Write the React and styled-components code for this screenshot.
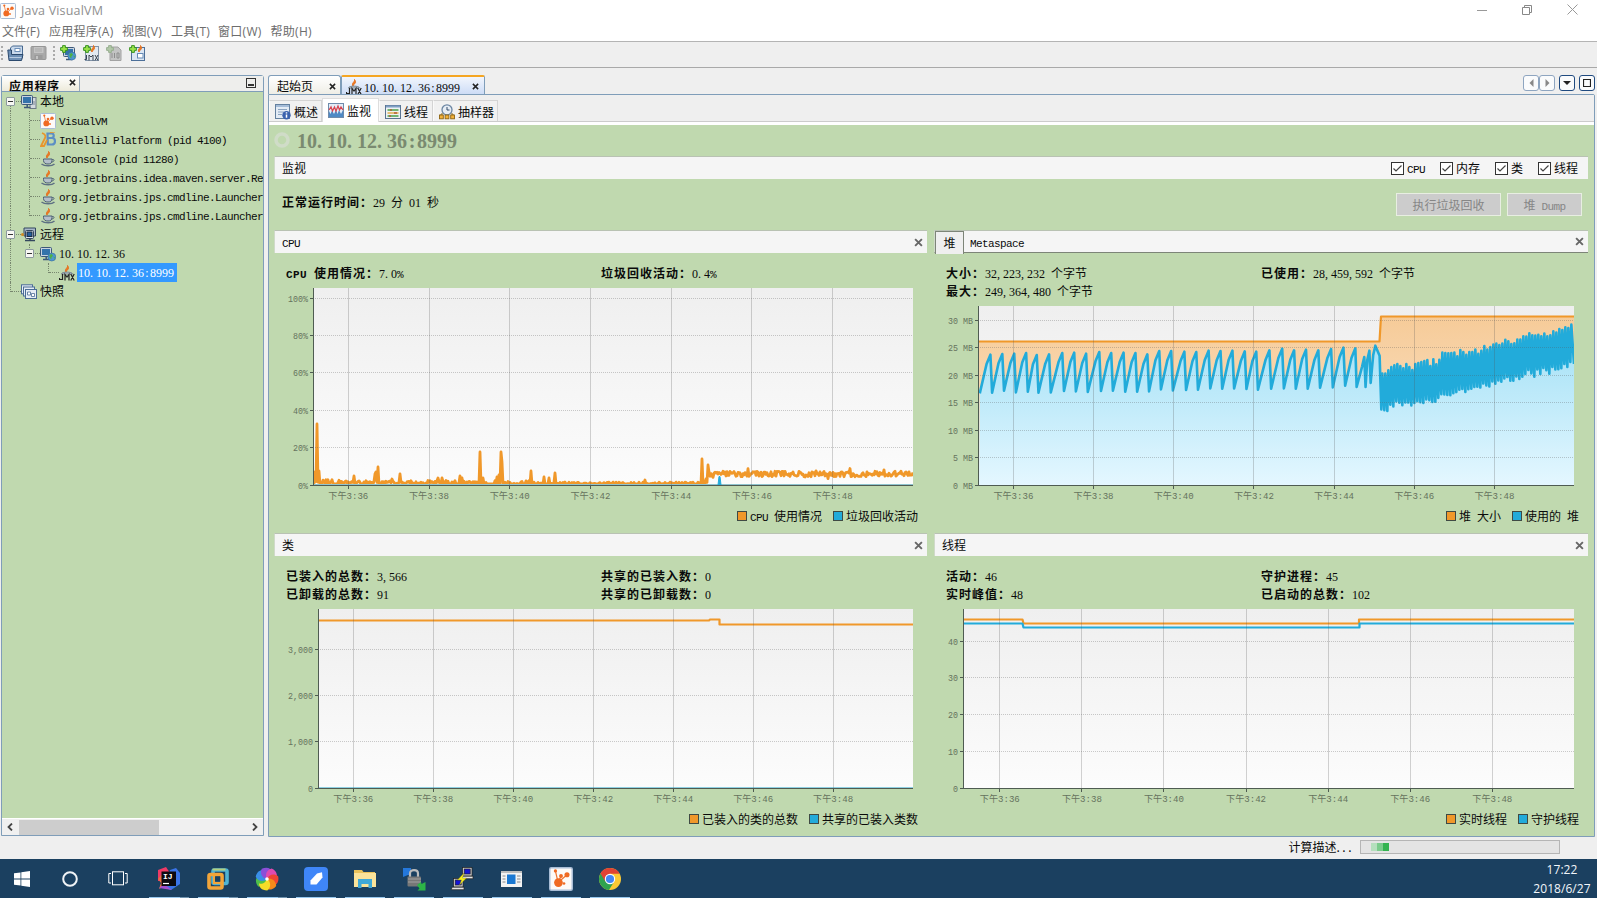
import React from "react";
import styled, { createGlobalStyle, css } from "styled-components";

const GREEN = "#c0d9af";
const ORANGE = "#f0982a";
const BLUE = "#22abda";

const Global = createGlobalStyle`
  html, body { margin: 0; padding: 0; }
  body {
    width: 1597px; height: 898px; overflow: hidden; background: #efefef; color: #0a0a0a;
    font: 12px/18px "Noto Sans CJK SC", sans-serif;
    white-space: nowrap; cursor: default;
  }
  * { box-sizing: border-box; }
  svg { display: block; flex: none; }
`;

/* ---------- text ---------- */
const Latin = styled.span`
  font-family: "Liberation Mono", monospace;
  font-size: 11px;
  line-height: 1;
  vertical-align: 0.5px;
  letter-spacing: ${(p) => (p.$bold ? 0.4 : -0.6)}px;
  font-weight: ${(p) => (p.$bold ? 700 : 400)};
  white-space: pre;
`;
/* figures sit on a half-em grid; stops and commas are widened to fill their cell */
const Figures = styled.span`
  font-family: "Liberation Serif", serif; font-size: ${(p) => p.$size}px; font-weight: ${(p) => (p.$heavy ? 700 : 400)}; line-height: 1; white-space: pre;
  i { font-style: normal; letter-spacing: 0.25em; }
  b { font-weight: inherit; padding: 0 ${(p) => (p.$heavy ? 0.083 : 0.111)}em; }
  u { text-decoration: none; letter-spacing: -0.333em; margin-right: 0; }
`;
const Num = ({ children, size = 12, heavy }) => (
  <Figures $size={size} $heavy={heavy}>
    {children.split(/([.,: ])/).map((s, i) =>
      s === ":" ? <b key={i}>{s}</b> : /^[., ]$/.test(s) ? <i key={i}>{s}</i> : s
    )}
  </Figures>
);

const T = ({ children, bold }) =>
  String(children)
    .split(/([\x20-\x7e]+)/)
    .filter(Boolean)
    .map((s, i) => {
      if (!/^[\x20-\x7e]/.test(s)) return <React.Fragment key={i}>{s}</React.Fragment>;
      if (/\d/.test(s) && /^[\d.,: ]+$/.test(s)) return <Num key={i}>{s}</Num>;
      if (/^[\d.]+%$/.test(s)) return <React.Fragment key={i}><Num>{s.slice(0, -1)}</Num><Latin>%</Latin></React.Fragment>;
      return <Latin key={i} $bold={bold}>{s}</Latin>;
    });

/* ---------- icons ---------- */
const VmIcon = ({ size = 16 }) => (
  <svg width={size} height={size} viewBox="0 0 16 16">
    <rect x=".5" y=".5" width="15" height="15" rx="1" fill="#fdfaf8" stroke="#a9bdd6" />
    <path d="M6 10 4.3 2.8M6 10l2.3-4.2M7 9.5l5-4.3" stroke="#ee7530" strokeWidth=".8" fill="none" />
    <circle cx="6.3" cy="10.4" r="2.9" fill="#f06a22" />
    <circle cx="4.3" cy="2.6" r="1.1" fill="#f06a22" />
    <circle cx="8" cy="6" r="1.3" fill="#f06a22" />
    <circle cx="12" cy="5.2" r="1.7" fill="#f06a22" />
    <circle cx="10" cy="11" r=".9" fill="#f06a22" />
  </svg>
);
const Plus = () => (
  <path d="M2.6.6h2.8v2h2v2.8h-2v2H2.6v-2h-2V2.6h2z" fill="#9be24a" stroke="#2f8c1b" strokeWidth=".9" />
);
const OpenIcon = () => (
  <svg width="17" height="17" viewBox="0 0 17 17">
    <path d="M3.500 12V3l2-2h10v12z" fill="#c9d9ec" stroke="#46688f" />
    <rect x="8" y="3.500" width="5" height="3" fill="#fff" stroke="#6c8fb8" />
    <path d="M.8 5h3.700v4.500H16L14.500 15.500H2z" fill="#6d8fb5" stroke="#2c4a6e" />
    <path d="M2.500 12.500h12" stroke="#b9cce2" />
  </svg>
);
const SaveIcon = () => (
  <svg width="17" height="17" viewBox="0 0 17 17">
    <rect x="1" y="1.500" width="15" height="13" rx="1" fill="#a9a9a9" stroke="#969696" />
    <rect x="4" y="2" width="9.500" height="6" fill="#c4c4c4" />
    <path d="M5 4h7M5 6h7" stroke="#aaa" />
    <rect x="4.500" y="10" width="8" height="5" fill="#9a9a9a" />
    <rect x="6" y="11" width="2" height="3" fill="#c4c4c4" />
  </svg>
);
const Monitor = ({ x = 0, y = 0 }) => (
  <g transform={`translate(${x} ${y})`}>
    <rect x=".5" y=".5" width="11" height="9" rx="1" fill="#c9d3df" stroke="#3d5878" />
    <rect x="2" y="2" width="8" height="6" fill="#3473ab" />
    <path d="M3 12.500h6.500M6.200 10v2" stroke="#3d5878" strokeWidth="1.500" />
  </g>
);
const Globe = () => (
  <g>
    <circle cx="11.800" cy="11" r="4" fill="#4d96d4" stroke="#386a96" strokeWidth=".6" />
    <path d="M9.500 8.800l2.500-.8 1 2-1.500 1.200-.2 2.400-1.800-2z M13.500 10.500l1.500.5-.8 2z" fill="#4fb045" />
  </g>
);
const AddHostIcon = () => (
  <svg width="17" height="17" viewBox="0 0 17 17"><Monitor x={3} y={2} /><Globe /><Plus /></svg>
);
const JavaIcon = () => (
  <svg width="16" height="16" viewBox="0 0 16 16">
    <path d="M8.500.5c1 2-3.500 3.500-1.500 6.500 0-1.500 3-2.500 2.500-4.500C9.500 1.500 9 1 8.500.5z" fill="#ee7a22" stroke="#e5701d" strokeWidth="1" />
    <path d="M3.500 8h8.500v1.500c0 2.500-1.500 3.500-4 3.500s-4.500-1-4.500-3.500z" fill="#b4bfca" stroke="#4d6175" />
    <path d="M12 8.500c3-.5 2.500 2.500-.5 2.500" fill="none" stroke="#4d6175" />
    <path d="M1.500 13c3 2.400 10.500 2.400 13 0" fill="none" stroke="#5d6f83" strokeWidth="1.500" />
  </svg>
);
const Flame = ({ x = 0 }) => (
  <path transform={`translate(${x} 0)`} d="M8.500.5c1 2-3.500 3.500-1.500 6.500 0-1.500 3-2.500 2.500-4.500z" fill="#ee7a22" stroke="#e5701d" strokeWidth="1" />
);
const JmxMark = () => (
  <path
    d="M3.500 9v5.500H.5V13M6 15.500V9.500l2 2.500 2-2.500v6M11.800 9l3.400 6.500M15.200 9l-3.400 6.500"
    fill="none" stroke="#222" strokeWidth="1.200"
  />
);
const JmxIcon = () => (
  <svg width="16" height="16" viewBox="0 0 16 16">
    <Flame />
    <path d="M2.500 9c0-2.500 11-2.500 11 0z" fill="#c9d0d6" stroke="#6b7a88" strokeWidth=".9" />
    <JmxMark />
  </svg>
);
const AddJmxIcon = () => (
  <svg width="17" height="17" viewBox="0 0 17 17">
    <rect x="2.500" y="1.500" width="13" height="14" fill="#e2e9f1" stroke="#8193a8" />
    <Flame x={2} />
    <path d="M3.500 10v4.500H1.500M6 15.500V10l2 2 2-2v5.500M12 10l3 5.500M15 10l-3 5.500" fill="none" stroke="#3a4450" />
    <Plus />
  </svg>
);
const AddDumpIcon = () => (
  <svg width="17" height="17" viewBox="0 0 17 17">
    <path d="M4 2h8l3 3v10.500H4z" fill="#c3c3c3" stroke="#a2a2a2" />
    <path d="M6 8v5M8.500 8v5M11 8h2v5h-2z" stroke="#8d8d8d" fill="none" />
    <path d="M2.600.6h2.800v2h2v2.800h-2v2H2.600v-2h-2V2.600h2z" fill="#b2c8a8" stroke="#94ac8c" strokeWidth=".9" />
  </svg>
);
const AddSnapIcon = () => (
  <svg width="17" height="17" viewBox="0 0 17 17">
    <rect x="2.500" y="2.500" width="13" height="13" fill="#dbe6f3" stroke="#4d6f99" />
    <Flame x={3} />
    <rect x="8.500" y="8.500" width="5.500" height="4.500" fill="#fff" stroke="#6489b5" /><Plus />
  </svg>
);
const LocalIcon = () => (
  <svg width="16" height="16" viewBox="0 0 16 16">
    <rect x="9" y="3.500" width="6" height="11" fill="#d4d9df" stroke="#6d7884" /><path d="M11 8h3M11 10h3" stroke="#7d8894" />
    <Monitor y={1} />
  </svg>
);
const RemoteIcon = () => (
  <svg width="16" height="16" viewBox="0 0 16 16">
    <path d="M3 1h11.500v8H3z" fill="#a9b9ca" stroke="#33475e" />
    <rect x="4.500" y="3.500" width="8" height="8" rx="1" fill="#dbe3ec" stroke="#33475e" />
    <rect x="6" y="5" width="5" height="4.500" fill="#245f9c" stroke="#1b2c40" />
    <path d="M4 13.500h10M9 12v2" stroke="#33475e" strokeWidth="1.500" />
    <circle cx="1.500" cy="7.500" r="1.500" fill="#d08c20" />
  </svg>
);
const HostIcon = () => <svg width="16" height="16" viewBox="0 0 16 16"><Monitor y={1} /><Globe /></svg>;
const SnapIcon = () => (
  <svg width="16" height="16" viewBox="0 0 16 16" fill="#e6edf5" stroke="#4a6c96">
    <rect x=".5" y=".8" width="11" height="9" /><rect x="2.500" y="3" width="11" height="9" /><rect x="4.500" y="5.500" width="11" height="9" />
    <path d="M6.500 8h3v3h-3zM10.500 9.500h3v3h-3z" fill="#fff" strokeWidth=".8" />
  </svg>
);
const IdeaIcon = () => (
  <svg width="16" height="16" viewBox="0 0 16 16" fill="none">
    <path d="M7.500 1.500h4c3 0 3 4.500 0 4.500h-3h3.500c4 0 4 6.500 0 6.500H7.800z" stroke="#5d8fc4" strokeWidth="2.200" />
    <path d="M2 1c3 1 4 3 3 5L1 14h3l3-6" stroke="#e8962c" strokeWidth="1.800" />
    <path d="M10 .5 15 0" stroke="#e8962c" strokeWidth="1.200" />
  </svg>
);
const OverviewIcon = () => (
  <svg width="16" height="16" viewBox="0 0 16 16">
    <rect x=".5" y=".5" width="14" height="14" fill="#e3ebf5" stroke="#64809f" />
    <path d="M1 2h13" stroke="#a5bcd8" strokeWidth="2" /><path d="M3 5.500h9M3 8h6M3 10.500h4" stroke="#8ba3c0" />
    <circle cx="11.500" cy="11.200" r="4.200" fill="#3a62ae" /><path d="M11.500 10.500v3.200M11.500 8.300v1.200" stroke="#fff" strokeWidth="1.500" />
  </svg>
);
const MonitorIcon = () => (
  <svg width="16" height="16" viewBox="0 0 16 16">
    <rect x=".5" y=".5" width="15" height="14" fill="#e4edf7" stroke="#6f8bab" />
    <path d="M1 14V8l1.500 3L4 7.500 6 11l2-4 1.500 4L11 7l2 4 2-4v7z" fill="#4f89c4" />
    <path d="M1 7l2-3 1.500 4L6.500 4 8 8l2-5 1.500 4L13 4l2 3" fill="none" stroke="#d94450" strokeWidth="1.300" />
  </svg>
);
const ThreadsIcon = () => (
  <svg width="16" height="16" viewBox="0 0 16 16">
    <rect x=".5" y="1.500" width="15" height="13" fill="#eef2f4" stroke="#597391" /><path d="M1 2.500h14" stroke="#7f9fc4" strokeWidth="2" />
    <path d="M2.500 6h11M2.500 12h11" stroke="#4aa04a" strokeWidth="1.300" /><path d="M2.500 9h11" stroke="#e0a030" strokeWidth="1.300" />
    <path d="M5 6h2M9 9h3M4 12h2" stroke="#b0603a" strokeWidth="1.300" />
  </svg>
);
const SamplerIcon = () => (
  <svg width="16" height="16" viewBox="0 0 16 16">
    <circle cx="8" cy="5.800" r="5" fill="#e6edf5" stroke="#6c86a3" strokeWidth="1.300" /><path d="M8 3v3h2.500" stroke="#344d6b" fill="none" />
    <path d="M2 11.500V10h2M14 11.500V10h-2" stroke="#8a6a20" fill="none" />
    <g fill="#f3b13a" stroke="#8d6412" strokeWidth=".9"><rect x=".5" y="11" width="3.800" height="3.800" /><rect x="6.100" y="11" width="3.800" height="3.800" /><rect x="11.700" y="11" width="3.800" height="3.800" /></g>
  </svg>
);
const Cross = ({ size = 8, color = "#555" }) => (
  <svg width={size} height={size} viewBox="0 0 8 8"><path d="M1 1l6 6M7 1 1 7" stroke={color} strokeWidth="1.700" /></svg>
);

/* ---------- window chrome ---------- */
const Frame = styled.div`display: flex; flex-direction: column; width: 1597px; height: 898px;`;
const TitleBar = styled.div`
  display: flex; align-items: center; height: 21px; background: #fff; color: #8f8f8f;
  font: 12.500px/20px "Open Sans", sans-serif; letter-spacing: 0.18px; gap: 5px;
`;
const WindowButtons = styled.div`display: flex; margin-left: auto; gap: 35px; padding: 0 19px 2px 0; align-items: center;`;
const MenuBar = styled.div`
  display: flex; height: 21px; background: #fff; color: #6d6d6d; padding-left: 2px; gap: 9.500px;
  font: 12px/21px "Open Sans", "Noto Sans CJK SC", sans-serif; border-bottom: 1px solid #b4b4b4;
`;
const MenuItem = styled.span`width: ${(p) => p.$w}px; letter-spacing: ${(p) => p.$track || 0.1}px;`;
const ToolBar = styled.div`
  display: flex; align-items: center; height: 26px; border-bottom: 1px solid #a9a9a9; padding: 0 0 2px 1px; gap: 6px;
`;
const Grip = styled.i`width: 2px; height: 15px; background: repeating-linear-gradient(#aaa 0 2px, transparent 2px 4px); margin-right: ${(p) => p.$mr || 0}px;`;
const Work = styled.div`display: flex; height: 768px; padding: 7px 2px 0 1px; gap: 4px;`;

/* ---------- left explorer ---------- */
const Explorer = styled.div`
  width: 263px; height: 761px; border: 1px solid #7f9db9; border-radius: 3px 3px 0 0; display: flex; flex-direction: column; background: ${GREEN};
`;
const ExplorerHead = styled.div`
  display: flex; height: 16px; background: #eeeeec; border-bottom: 1px solid #7f9db9; overflow: hidden;
  align-items: flex-start; justify-content: space-between; padding-right: 7px;
`;
const ExplorerTab = styled.div`
  width: 78px; height: 16px; background: linear-gradient(#fff, #ece9d8); border-right: 1px solid #9aa9b8;
  display: flex; padding-left: 7px; gap: 9px; font-weight: 700; line-height: 20px; letter-spacing: 0.7px;
  svg { margin-top: 3px; }
`;
const MinButton = styled.i`width: 10px; height: 10px; border: 1px solid #333; margin-top: 2px; padding: 5px 1px 0; &::after { content: ""; display: block; height: 2px; background: #333; }`;
const Tree = styled.div`flex: 1; overflow: hidden;`;
const TreeRow = styled.div`display: flex; align-items: center; height: 19.050px;`;
const Guide = styled.i`
  position: relative; flex: none; width: 19px; height: 100%;
  &::before {
    content: ""; position: absolute; left: 8px; width: 0; border-left: 1px dotted #77866e;
    ${(p) => ({
      none: css`display: none;`,
      start: css`top: 50%; bottom: 0;`,
      full: css`top: 0; bottom: 0;`,
      tee: css`top: 0; bottom: 0;`,
      end: css`top: 0; bottom: 50%;`,
    })[p.$kind]}
  }
  &::after {
    content: ""; position: absolute; left: 9px; right: 0; top: 9px; border-top: 1px dotted #77866e;
    ${(p) => (p.$kind === "none" || p.$kind === "full" ? "display: none;" : "")}
  }
`;
const Expander = styled.b`
  position: absolute; z-index: 1; left: 4px; top: 5px; width: 9px; height: 9px; background: #f8f8f4; border: 1px solid #8c9a9e; border-radius: 1px;
  &::after { content: ""; position: absolute; left: 1px; right: 1px; top: 3px; height: 1px; background: #333; }
`;
const NodeText = styled.span`
  margin-left: 2px; padding: 0 1px; height: 19px; line-height: 18px;
  ${(p) => p.$selected && css`background: #3399ff; color: #fff; padding: 0 3px 0 1px;`}
`;
const nodes = [
  ["本地", <LocalIcon />, ["start*"]],
  ["VisualVM", <VmIcon />, ["full", "tee"]],
  ["IntelliJ Platform (pid 4100)", <IdeaIcon />, ["full", "tee"]],
  ["JConsole (pid 11280)", <JavaIcon />, ["full", "tee"]],
  ["org.jetbrains.idea.maven.server.Re", <JavaIcon />, ["full", "tee"]],
  ["org.jetbrains.jps.cmdline.Launcher", <JavaIcon />, ["full", "tee"]],
  ["org.jetbrains.jps.cmdline.Launcher", <JavaIcon />, ["full", "end"]],
  ["远程", <RemoteIcon />, ["tee*"]],
  ["10.10.12.36", <HostIcon />, ["full", "end*"]],
  ["10.10.12.36:8999", <JmxIcon />, ["full", "none", "end"]],
  ["快照", <SnapIcon />, ["end"]],
];
const HScroll = styled.div`display: flex; align-items: center; height: 17px; background: #f0f0f0; border-top: 1px solid #fff; padding: 0 5px; justify-content: space-between;`;
const Thumb = styled.i`width: 140px; height: 15px; background: #cdcdcd; margin-left: 6px; margin-right: auto;`;

/* ---------- document area ---------- */
const Doc = styled.div`width: 1327px; height: 761px; display: flex; flex-direction: column;`;
const DocTabs = styled.div`display: flex; height: 19px;`;
const DocTab = styled.div`
  display: flex; align-items: center; width: ${(p) => p.$w}px; height: 19px; padding: 2px ${(p) => (p.$active ? 5 : 4)}px 0 ${(p) => (p.$active ? 4 : 8)}px;
  border: 1px solid #7f9db9; border-bottom: 0; border-radius: 3px 3px 0 0; background: linear-gradient(#fff, #efeee6);
  ${(p) => p.$active && css`background: linear-gradient(#f2f6fd, #cddcf6); border-top: 2px solid #f5a623; border-radius: 2px 2px 0 0;`}
  span { margin-left: ${(p) => (p.$active ? 1 : 0)}px; }
  > svg:last-child { margin-left: auto; }
`;
const TabControls = styled.div`display: flex; gap: 4px; margin-left: auto;`;
const ControlPair = styled.div`display: flex;`;
const ControlButton = styled.i`
  width: 16px; height: 16px; border: 1px solid ${(p) => (p.$dim ? "#8ea5c0" : "#1f4a80")}; border-radius: 3px; background: #fafbfc;
  display: grid; place-items: center;
`;
const DocBody = styled.div`flex: 1; border: 1px solid #7f9db9; background: ${GREEN}; display: flex; flex-direction: column; border-radius: 0 2px 0 0;`;
const ViewTabs = styled.div`display: flex; align-items: flex-end; height: 30px; padding: 0 0 3px 0; background: linear-gradient(#efefef 26px, #ccc 26px 27px, #fff 27px);`;
const ViewTab = styled.div`
  display: flex; align-items: center; gap: 3px; width: ${(p) => p.$w}px; height: 21px; padding: 1px 0 0 5px; background: #f1f1f1;
  border: 1px solid #d4d4d4; border-left-color: #fafafa; border-bottom: 0;
  margin-bottom: 1px; 
  ${(p) => p.$active && css`background: #fff; height: 24px; border-color: #ddd; margin-bottom: 0; padding-bottom: 1px;`}
`;
const SourceTitle = styled.div`
  display: flex; align-items: center; gap: 7px; height: 31px; padding: 2px 0 0 5px; color: #7a8a70; line-height: 22px;
  svg { margin-bottom: 3px; }
  span { line-height: 22px; }
`;
const SectionBar = styled.div`
  display: flex; align-items: center; height: 23px; background: #f5f5f5; border-top: 1px solid #b9c2b3; border-left: 1px solid #d0dac9;
  padding: 0 ${(p) => p.$right ?? 4}px 0 7px; justify-content: space-between;
  ${(p) => p.$margin && css`margin: 0 6px 0 5px; padding-right: 10px;`}
  ${(p) => p.$tabs && css`padding-left: 0; border-bottom: 1px solid #7d8578;`}
`;
const Checks = styled.div`display: flex; gap: 15px;`;
const Check = styled.label`display: flex; gap: 3px; align-items: center;`;
const BarTab = styled.span`
  width: 29px; height: 23px; border: 1px solid #7d8578; border-bottom: 0; background: #efefef; text-align: center; line-height: 22px; margin-top: 1px; 
`;
const BarTabs = styled.div`display: flex; gap: 6px; align-items: center; height: 23px;`;
const UptimeRow = styled.div`display: flex; height: 51px; align-items: flex-start; padding: 14px 12px 0 13px;`;
const Caption = styled.b`font-weight: 700; letter-spacing: 1px;`;
const Uptime = styled.div`flex: 1;`;
const Disabled = styled.button`
  width: ${(p) => p.$w}px; height: 23px; margin-left: 6px; padding: 0; border: 1px solid #e8eee2; background: #cccccc; color: #868686;
  font: 12px/20px "Noto Sans CJK SC", sans-serif;
`;
const Panels = styled.div`
  display: grid; grid-template-columns: 653px 654px; grid-template-rows: 303px 303px; column-gap: 7px; padding-left: 5px; height: 606px;
`;
const Panel = styled.section`display: flex; flex-direction: column; overflow: hidden;`;
const Stats = styled.div`display: grid; grid-template-columns: 315px 1fr; grid-auto-rows: 18px; padding: 11px 0 0 12px; margin-bottom: 3px; line-height: 18px;`;
const Legend = styled.div`display: flex; justify-content: flex-end; gap: 11px; height: 20px; align-items: center; padding-right: ${(p) => p.$right}px;`;
const LegendItem = styled.span`display: flex; align-items: center; gap: 3px;`;
const Swatch = styled.i`width: 10px; height: 10px; border: 1px solid #3f4a44; background: ${(p) => p.$color}; margin-bottom: 1px;`;

const ChartText = styled.text`font: 9.500px "Liberation Mono", "Noto Sans CJK SC", monospace; fill: #65725d;`;

function Chart({ id, box, plot, xs, ys, children }) {
  const [x0, y0, x1, y1] = plot;
  return (
    <svg width={box[2]} height={box[3]} viewBox={box.join(" ")}>
      <defs>
        <linearGradient id={id + "bg"} x2="0" y2="1"><stop stopColor="#efefef" /><stop offset="1" stopColor="#fcfcfc" /></linearGradient>
        <linearGradient id={id + "or"} x2="0" y2="1"><stop stopColor="#f6cb98" /><stop offset="1" stopColor="#fbe8d2" /></linearGradient>
        <linearGradient id={id + "bl"} x2="0" y2="1"><stop stopColor="#9fdff5" /><stop offset="1" stopColor="#e4f7ff" /></linearGradient>
        <clipPath id={id + "cp"}><rect x={x0} y={y0} width={x1 - x0} height={y1 - y0 + 1} /></clipPath>
      </defs>
      <rect x={x0} y={y0} width={x1 - x0} height={y1 - y0} fill={`url(#${id}bg)`} />
      <g clipPath={`url(#${id}cp)`}>{children}</g>
      <g stroke="#555" strokeOpacity=".3" shapeRendering="crispEdges">
        {xs.map((x) => <path key={x} d={`M${Math.floor(x) + 0.5} ${y0}V${y1}`} strokeOpacity=".26" />)}
        {ys.map(([l, y]) => <path key={l} d={`M${x0} ${Math.floor(y) + 0.5}H${x1}`} strokeDasharray="1 1" />)}
      </g>
      <g stroke="#4f5c52" shapeRendering="crispEdges">
        <path d={`M${x0 + 0.5} ${y0}V${y1 + 0.5}M${x0 - 3} ${y1 + 0.5}H${x1}`} />
        {xs.map((x) => <path key={x} d={`M${Math.floor(x) + 0.5} ${y1}v4`} />)}
        {ys.map(([l, y]) => <path key={l} d={`M${x0 - 3} ${Math.floor(y) + 0.5}h3`} />)}
      </g>
      {xs.map((x, i) => (
        <ChartText key={i} x={x} y={y1 + 14} textAnchor="middle" textLength="40" lengthAdjust="spacingAndGlyphs">{`下午3:${36 + i * 2}`}</ChartText>
      ))}
      {ys.map(([l, y]) => (
        <ChartText key={l} x={x0 - 5} y={y + 3.500} textAnchor="end" textLength={l.length * 5} lengthAdjust="spacingAndGlyphs">{l}</ChartText>
      ))}
    </svg>
  );
}

/* ---------- series ---------- */
const hash = (n) => {
  const v = Math.sin(n * 127.1 + 3.7) * 43758.5453;
  return v - Math.floor(v);
};
const cpuSpikes = {
  314: 472, 315: 476, 317: 424, 319: 471, 354: 476, 375: 474, 376: 472, 378: 467, 392: 479, 400: 474, 438: 478, 442: 478,
  460: 476, 462: 478, 480: 452, 483: 478, 497: 477, 499: 475, 501: 452, 502: 462, 531: 471, 544: 477, 549: 478, 555: 473,
  645: 480, 702: 459, 704: 481, 706: 479, 708: 465,
};
let cpuLine = "M314 484";
for (let x = 314; x <= 913; x += 1) {
  let y;
  if (cpuSpikes[x]) y = cpuSpikes[x];
  else if (x < 709) {
    const lift = x < 340 ? 5 : x < 540 ? 3.5 : 2;
    y = 484 - (hash(x) > 0.45 ? hash(x + 900) * lift : 0);
  } else y = 474 + (hash(x) - 0.5) * 5.5 + (x % 17 === 0 ? -3 : 0) + (x % 23 === 0 ? 3 : 0);
  cpuLine += `L${x} ${y.toFixed(1)}`;
}

const sx = (v) => 930 + v / 2.351;
const sy = (v) => 225 + v / 3;
const sawPeaks = [[142,389],[170,387],[198,386],[226,384],[251,390],[280,388],[311,384],[339,383],[367,386],[398,381],[426,384],[455,383],[483,384],[511,388],[539,378],[567,378],[598,380],[626,381],[655,377],[683,378],[711,377],[740,379],[767,380],[798,376],[828,371],[856,376],[884,374],[913,376],[943,372],[972,368],[1000,370],[1021,396],[1033,377],[1047,362]];
const sawLows = [503,497,502,500,503,502,498,499,501,498,497,500,500,499,493,496,495,494,490,491,490,492,494,491,490,491,491,488,487,482,486,486,474];
let used = `M${sx(117)} ${sy(505)}`;
sawPeaks.forEach(([px, py], i) => {
  const back = i > 30 ? 5 : 9;
  used += `L${sx(px - back)} ${sy(py + 28)}L${sx(px)} ${sy(py)}`;
  if (i < sawLows.length) used += `L${sx(px + (i > 29 ? 3 : 4))} ${sy(sawLows[i])}`;
});
used += `L${sx(1057)} ${sy(392)}`;
const upper = [[63,220],[75,222],[95,200],[112,192],[130,205],[139,192],[157,210],[166,192],[184,186],[202,180],[211,198],[220,178],[231,196],[247,158],[265,160],[283,158],[293,170],[301,150],[313,158],[322,168],[331,150],[341,160],[350,140],[359,178],[368,132],[385,152],[394,136],[412,130],[421,138],[437,118],[450,128],[459,138],[470,116],[478,126],[487,105],[496,116],[505,98],[523,110],[532,100],[541,114],[550,98],[568,114],[577,90],[587,102],[596,84],[604,96],[613,79],[623,88],[632,72],[642,82]];
const lower = [[63,328],[83,333],[92,312],[101,320],[110,302],[130,318],[139,302],[158,320],[166,302],[193,310],[202,292],[212,306],[230,305],[240,282],[257,284],[275,286],[284,274],[293,278],[302,262],[320,280],[329,258],[338,272],[347,252],[357,268],[372,248],[386,265],[395,240],[403,258],[412,238],[421,248],[440,228],[457,250],[466,226],[476,238],[493,226],[505,210],[523,230],[532,208],[541,222],[551,202],[569,222],[578,198],[587,210],[605,204],[614,190],[623,202],[632,184],[642,194]];
const at = (pts, x) => {
  const i = Math.max(1, pts.findIndex((p) => p[0] >= x));
  const [a, b] = [pts[i - 1], pts[i]];
  return a[1] + ((b[1] - a[1]) * (x - a[0])) / (b[0] - a[0]);
};
for (let x = 64; x <= 638; x += 9) {
  used += `L${1360 + x / 3} ${300 + at(lower, x) / 3}L${1360 + (x + 3) / 3} ${300 + at(upper, x + 3) / 3}`;
}
used += "L1574 364";

const xsOf = (a, b) => Array.from({ length: 7 }, (_, i) => a + ((b - a) * i) / 6);
const Series = ({ d, color, width = 2.2 }) => (
  <path d={d} fill="none" stroke={color} strokeWidth={width} strokeLinejoin="round" />
);

const PanelBar = ({ children, right }) => (
  <SectionBar $right={right}><span><T>{children}</T></span><Cross size={9} color="#666" /></SectionBar>
);
const Stat = ({ name, value }) => (
  <span><Caption><T bold>{name + "："}</T></Caption><T>{value}</T></span>
);
const LegendRow = ({ a, b }) => (
  <Legend $right={9}>
    <LegendItem><Swatch $color={ORANGE} /><span><T>{a}</T></span></LegendItem>
    <LegendItem><Swatch $color={BLUE} /><span><T>{b}</T></span></LegendItem>
  </Legend>
);
const CheckBox = ({ children }) => (
  <Check>
    <svg width="13" height="13" viewBox="0 0 13 13"><rect x=".5" y=".5" width="12" height="12" fill="#fff" stroke="#333" /><path d="M2.500 6.500 5 9l5.500-5.500" fill="none" stroke="#444" strokeWidth="1.200" /></svg>
    <span><T>{children}</T></span>
  </Check>
);

/* ---------- status and taskbar ---------- */
const Status = styled.div`display: flex; align-items: center; justify-content: flex-end; height: 23px; padding: 0 37px 1px 0; gap: 6px;`;
const StatusText = styled.span`i { font-style: normal; letter-spacing: 2.5px; }`;
const Progress = styled.div`
  display: flex; width: 200px; height: 14px; border: 1px solid #b5b5b5; background: #e4e4e4; padding: 2px 0 2px 10px;
  i { width: 6px; height: 8px; } i:nth-child(1) { background: #b5dfbd; } i:nth-child(2) { background: #7acb8b; } i:nth-child(3) { background: #34b350; }
`;
const Taskbar = styled.div`display: flex; height: 39px; background: #1b4060; justify-content: space-between;`;
const Slots = styled.div`display: flex; padding-left: 2px;`;
const Slot = styled.div`
  width: ${(p) => (p.$run ? 49 : 48)}px; height: 39px; display: grid; place-items: center; position: relative; margin-left: ${(p) => p.$ml || 0}px;
  ${(p) => p.$run && css`&::after { content: ""; position: absolute; left: 5px; width: 40px; bottom: 0; height: 1px; background: ${p.$multi ? "linear-gradient(90deg, #98c8ee 31px, #7295b0 31px)" : "#98c8ee"}; }`}
`;
const Clock = styled.div`width: 70px; text-align: center; color: #f2f6fa; font: 12px/19px "Open Sans", sans-serif; letter-spacing: 0.05px; padding: 1px 0 0 0;`;

const StartIcon = () => <svg width="16" height="16" viewBox="0 0 16 16" fill="#fff"><path d="M0 2.300 6.500 1.400v6.200H0zM7.300 1.300 16 0v7.600H7.300zM0 8.400h6.500v6.200L0 13.700zM7.300 8.400H16V16l-8.700-1.300z" /></svg>;
const CortanaIcon = () => <svg width="18" height="18" viewBox="0 0 18 18"><circle cx="9" cy="9" r="6.800" fill="none" stroke="#f0f3f6" strokeWidth="2" /></svg>;
const TaskViewIcon = () => <svg width="20" height="15" viewBox="0 0 20 15" fill="none" stroke="#fff"><rect x="4.500" y=".8" width="11" height="13" /><path d="M3 2.500H.8v9.500H3M17 2.500h2.200v9.500H17" /></svg>;
const IjText = styled.text`font: 700 8px "Liberation Mono", monospace; fill: #fff;`;
const IjIcon = () => (
  <svg width="24" height="24" viewBox="0 0 24 24">
    <path d="M1 3 9 0l4 6-5 8-7 0z" fill="#ef3a66" /><path d="M1 12 6 6l4 12-8 4 2-6z" fill="#e9703f" /><path d="M13 3l6-2 4 5v11l-9 6-6-2z" fill="#3a74e8" /><path d="M2 21l5-4 8 6z" fill="#a24fd0" />
    <rect x="4.500" y="4.500" width="14.500" height="14.500" fill="#0c0a10" /><IjText x="6" y="12">IJ</IjText><path d="M6 16.500h6" stroke="#fff" strokeWidth="1.200" />
  </svg>
);
const VmwareIcon = () => (
  <svg width="22" height="22" viewBox="0 0 22 22" fill="none">
    <rect x="6" y="2" width="14" height="13.500" rx="1.500" stroke="#4fb3d4" strokeWidth="3.600" />
    <path d="M5.500 1.500h13" stroke="#b3cf7f" strokeWidth="2" /><rect x="2" y="6.500" width="13" height="13.500" rx="1.500" stroke="#f2a53a" strokeWidth="3.600" /><rect x="7" y="7" width="8" height="8" stroke="#f2a53a" strokeWidth="2.200" />
    <rect x="8.200" y="8.500" width="5" height="5" fill="#1b4060" />
  </svg>
);
const PinwheelIcon = () => (
  <svg width="24" height="24" viewBox="0 0 24 24">
    {["#4fc04a", "#3a8fe8", "#8a4fd8", "#e04bb0", "#f04434", "#f58a1b", "#f6dc28"].map((c, i) => (
      <path key={c} d="M12 12C8.500 9.500 7.500 4 12 .5c6 .2 8.500 4 8 7.500C17.500 6.500 13.500 8 12 12z" fill={c} transform={`rotate(${i * 51.4 - 130} 12 12)`} />
    ))}
    <circle cx="12" cy="12" r="1.800" fill="#fff" />
  </svg>
);
const BirdIcon = () => <svg width="24" height="24" viewBox="0 0 24 24"><rect width="24" height="24" rx="4" fill="#3f86f8" /><path d="M6.500 13.500 13 6.500l5-1.200.5 5.200-6 7H6.500z" fill="#fff" /></svg>;
const FolderIcon = () => (
  <svg width="22" height="19" viewBox="0 0 22 19"><path d="M0 1h8l1.500 2H21v15H0z" fill="#e9c25c" /><path d="M0 4h22v14H0z" fill="#fbe39a" /><path d="M4 10h14v9h-3.500v-4h-7v4H4z" fill="#3fa9d8" /></svg>
);
const LockIcon = () => (
  <svg width="24" height="24" viewBox="0 0 24 24"><path d="M1 1h8v7H6L1 10z" fill="#2478dc" /><path d="M8 10V6.500c0-4.500 8-4.500 8 0V10" fill="none" stroke="#bcbcbc" strokeWidth="2.200" /><rect x="5.500" y="9.500" width="13.500" height="10" rx="1" fill="#777" /><path d="M6 12h13M6 15h13" stroke="#a2a2a2" /><path d="M15 18l4-3 .5 2 4-2v8.500h-8l2-2z" fill="#2db547" /></svg>
);
const PuttyIcon = () => (
  <svg width="23" height="24" viewBox="0 0 23 24">
    {[[9, 0], [0, 11]].map(([x, y]) => (
      <g key={x} transform={`translate(${x} ${y})`} stroke="#222" strokeWidth=".7"><rect x="2.500" y=".5" width="9.500" height="8.500" fill="#d0d0d0" /><rect x="4.200" y="2" width="6" height="5" fill="#1414d6" /><path d="M1 9.200h12v2.500H.3z" fill="#e4e4e4" /></g>
    ))}
    <path d="M13 6 6.500 13h4l-2 5L15.500 11h-4z" fill="#f6ee20" stroke="#807a10" strokeWidth=".4" />
  </svg>
);
const AppIcon = () => (
  <svg width="21" height="16" viewBox="0 0 21 16"><rect width="21" height="16" fill="#f3f3f3" /><path d="M0 1h21" stroke="#bdbdbd" strokeWidth="2" /><rect x="6" y="3.500" width="8.500" height="9.500" fill="#1a78d2" /><path d="M1.500 5h3M1.500 8h3M1.500 11h3M16 5h3.500M16 8h3.500M16 11h3.500" stroke="#888" /></svg>
);
const ChromeIcon = () => (
  <svg width="22" height="22" viewBox="0 0 22 22">
    <circle cx="11" cy="11" r="11" fill="#fbc934" /><path d="M11 11 1.500 5.500A11 11 0 0 0 10 22l5.500-9z" fill="#2fa350" /><path d="M11 11V5.800h9.700A11 11 0 0 0 1.500 5.500L6.300 13.600z" fill="#e04234" />
    <circle cx="11" cy="11" r="5.200" fill="#fff" /><circle cx="11" cy="11" r="4.100" fill="#4486f4" />
  </svg>
);

export default function App() {
  return (
    <Frame>
      <Global />
      <TitleBar>
        <VmIcon />
        <span>Java VisualVM</span>
        <WindowButtons>
          <svg width="10" height="10" viewBox="0 0 10 10"><path d="M0 5.500h10" stroke="#999" /></svg>
          <svg width="10" height="10" viewBox="0 0 10 10" fill="none" stroke="#888"><path d="M.5 2.500h7v7h-7zM2.500 2.500v-2h7v7h-2" /></svg>
          <svg width="11" height="11" viewBox="0 0 11 11"><path d="M.5.500l10 10M10.500.500l-10 10" stroke="#999" /></svg>
        </WindowButtons>
      </TitleBar>
      <MenuBar>
        <MenuItem $w={37.5}>文件(F)</MenuItem>
        <MenuItem $w={63.5} $track={0.25}>应用程序(A)</MenuItem>
        <MenuItem $w={39.5} $track={0.4}>视图(V)</MenuItem>
        <MenuItem $w={37.5} $track={0.3}>工具(T)</MenuItem>
        <MenuItem $w={43} $track={0.3}>窗口(W)</MenuItem>
        <MenuItem $w={41} $track={0.3}>帮助(H)</MenuItem>
      </MenuBar>
      <ToolBar>
        <Grip $mr={-2} /><OpenIcon /><SaveIcon /><Grip $mr={-1} /><AddHostIcon /><AddJmxIcon /><AddDumpIcon /><AddSnapIcon />
      </ToolBar>
      <Work>
        <Explorer>
          <ExplorerHead>
            <ExplorerTab>应用程序<Cross size={7} color="#222" /></ExplorerTab>
            <MinButton />
          </ExplorerHead>
          <Tree>
            {nodes.map(([label, icon, guides], i) => (
              <TreeRow key={i}>
                {guides.map((g, k) => (
                  <Guide key={k} $kind={g.replace("*", "")}>{g.endsWith("*") && <Expander />}</Guide>
                ))}
                {icon}
                <NodeText $selected={i === 9}><T>{label}</T></NodeText>
              </TreeRow>
            ))}
          </Tree>
          <HScroll>
            <svg width="6" height="8" viewBox="0 0 6 8"><path d="M5 .5 1.500 4 5 7.500" fill="none" stroke="#444" strokeWidth="1.800" /></svg>
            <Thumb />
            <svg width="6" height="8" viewBox="0 0 6 8"><path d="M1 .5 4.500 4 1 7.500" fill="none" stroke="#444" strokeWidth="1.800" /></svg>
          </HScroll>
        </Explorer>
        <Doc>
          <DocTabs>
            <DocTab $w={73}><span>起始页</span><Cross size={7} color="#222" /></DocTab>
            <DocTab $w={144} $active><JmxIcon /><span><T>10.10.12.36:8999</T></span><Cross size={7} color="#222" /></DocTab>
            <TabControls>
              <ControlPair>
                <ControlButton $dim><svg width="5" height="8" viewBox="0 0 5 8"><path d="M4.500 0v8L.5 4z" fill="#888" /></svg></ControlButton>
                <ControlButton $dim><svg width="5" height="8" viewBox="0 0 5 8"><path d="M.5 0v8l4-4z" fill="#888" /></svg></ControlButton>
              </ControlPair>
              <ControlButton><svg width="8" height="4" viewBox="0 0 8 4"><path d="M0 0h8L4 4z" fill="#222" /></svg></ControlButton>
              <ControlButton><svg width="8" height="8" viewBox="0 0 8 8"><path d="M.5.500h7v7h-7z" fill="none" stroke="#222" strokeWidth="1.200" /></svg></ControlButton>
            </TabControls>
          </DocTabs>
          <DocBody>
            <ViewTabs>
              <ViewTab $w={53}><OverviewIcon />概述</ViewTab>
              <ViewTab $w={57} $active><MonitorIcon />监视</ViewTab>
              <ViewTab $w={54}><ThreadsIcon />线程</ViewTab>
              <ViewTab $w={65}><SamplerIcon />抽样器</ViewTab>
            </ViewTabs>
            <SourceTitle>
              <svg width="16" height="16" viewBox="0 0 16 16"><circle cx="8" cy="8" r="6" fill="none" stroke="#d0dcc8" strokeWidth="3.500" /></svg>
              <span><Num size={20} heavy>10.10.12.36:8999</Num></span>
            </SourceTitle>
            <SectionBar $margin>
              <span>监视</span>
              <Checks><CheckBox>CPU</CheckBox><CheckBox>内存</CheckBox><CheckBox>类</CheckBox><CheckBox>线程</CheckBox></Checks>
            </SectionBar>
            <UptimeRow>
              <Uptime><Stat name="正常运行时间" value="29 分 01 秒" /></Uptime>
              <Disabled $w={105}>执行垃圾回收</Disabled>
              <Disabled $w={75}><T>堆 Dump</T></Disabled>
            </UptimeRow>
            <Panels>
              <Panel>
                <PanelBar>CPU</PanelBar>
                <Stats><Stat name="CPU 使用情况" value="7.0%" /><Stat name="垃圾回收活动" value="0.4%" /></Stats>
                <Chart id="cpu" box={[274, 285, 653, 221]} plot={[313, 288, 913, 485]} xs={xsOf(348.3, 832.7)}
                  ys={[["100%", 298], ["80%", 335.5], ["60%", 372.7], ["40%", 410.2], ["20%", 447.5], ["0%", 485]]}>
                  <Series d={cpuLine} color={ORANGE} width={2.8} />
                  <path d="M314 484.500H913" stroke="#8fc4ce" strokeWidth="1" /><path d="M718 485L719 476.500H720L721 485z" fill={BLUE} stroke={BLUE} />
                </Chart>
                <LegendRow a="CPU 使用情况" b="垃圾回收活动" />
              </Panel>
              <Panel>
                <SectionBar $tabs>
                  <BarTabs><BarTab>堆</BarTab><span><T>Metaspace</T></span></BarTabs><Cross size={9} color="#666" />
                </SectionBar>
                <Stats>
                  <Stat name="大小" value="32,223,232 个字节" /><Stat name="已使用" value="28,459,592 个字节" />
                  <Stat name="最大" value="249,364,480 个字节" />
                </Stats>
                <Chart id="heap" box={[934, 303, 654, 203]} plot={[978, 306, 1574, 485]} xs={xsOf(1013.4, 1494.4)}
                  ys={[["30 MB", 320.5], ["25 MB", 347.7], ["20 MB", 375.5], ["15 MB", 402.7], ["10 MB", 430.5], ["5 MB", 457.7], ["0 MB", 485]]}>
                  <path d="M978 341.500H1379.500L1381 316.500H1574V485H978z" fill="url(#heapor)" />
                  <Series d="M978 341.500H1379.500L1381 316.500H1574" color={ORANGE} />
                  <path d={used + "V485H979z"} fill="url(#heapbl)" />
                  <Series d={used} color={BLUE} width={2.6} />
                </Chart>
                <LegendRow a="堆 大小" b="使用的 堆" />
              </Panel>
              <Panel>
                <PanelBar>类</PanelBar>
                <Stats>
                  <Stat name="已装入的总数" value="3,566" /><Stat name="共享的已装入数" value="0" />
                  <Stat name="已卸载的总数" value="91" /><Stat name="共享的已卸载数" value="0" />
                </Stats>
                <Chart id="cls" box={[274, 606, 653, 203]} plot={[318, 609, 913, 788]} xs={xsOf(353.3, 833.1)}
                  ys={[["3,000", 649.3], ["2,000", 695.5], ["1,000", 741.3], ["0", 788]]}>
                  <Series d="M318 620.500H709L710 619.500H719.500V624.500H913" color={ORANGE} />
                  <path d="M318 787.500H913" stroke="#8fd0e2" />
                </Chart>
                <LegendRow a="已装入的类的总数" b="共享的已装入类数" />
              </Panel>
              <Panel>
                <PanelBar>线程</PanelBar>
                <Stats>
                  <Stat name="活动" value="46" /><Stat name="守护进程" value="45" />
                  <Stat name="实时峰值" value="48" /><Stat name="已启动的总数" value="102" />
                </Stats>
                <Chart id="thr" box={[934, 606, 654, 203]} plot={[963, 609, 1574, 788]} xs={xsOf(999.8, 1492.3)}
                  ys={[["40", 641.3], ["30", 677.5], ["20", 714.3], ["10", 751.3], ["0", 788]]}>
                  <Series d="M963 619.500H1022.500L1023.500 623.500H1359V619.500H1574" color={ORANGE} />
                  <Series d="M963 623.500H1022.500L1023.500 627.500H1359.500V623.500H1574" color={BLUE} />
                </Chart>
                <LegendRow a="实时线程" b="守护线程" />
              </Panel>
            </Panels>
          </DocBody>
        </Doc>
      </Work>
      <Status>
        <StatusText>计算描述<i>...</i></StatusText>
        <Progress><i /><i /><i /></Progress>
      </Status>
      <Taskbar>
        <Slots>
          <Slot $ml={-4}><StartIcon /></Slot>
          <Slot><CortanaIcon /></Slot>
          <Slot><TaskViewIcon /></Slot>
          <Slot $ml={2} $run $multi><IjIcon /></Slot>
          <Slot $run $multi><VmwareIcon /></Slot>
          <Slot $run $multi><PinwheelIcon /></Slot>
          <Slot $run><BirdIcon /></Slot>
          <Slot $run><FolderIcon /></Slot>
          <Slot $run><LockIcon /></Slot>
          <Slot $run><PuttyIcon /></Slot>
          <Slot $run><AppIcon /></Slot>
          <Slot $run><VmIcon size={24} /></Slot>
          <Slot $run><ChromeIcon /></Slot>
        </Slots>
        <Clock>17:22<br />2018/6/27</Clock>
      </Taskbar>
    </Frame>
  );
}
